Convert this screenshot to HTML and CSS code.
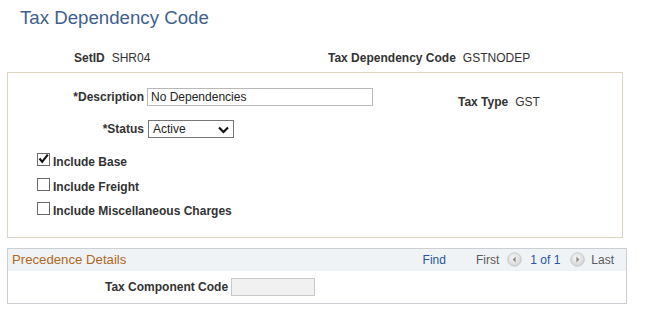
FILE: index.html
```html
<!DOCTYPE html>
<html lang="en">
<head>
<meta charset="utf-8">
<title>Tax Dependency Code</title>
<link rel="stylesheet" href="styles.css">
</head>
<body>
<div class="page">
  <h1 class="title">Tax Dependency Code</h1>

  <div class="keys">
    <div class="kv kv-first"><span class="lbl">SetID</span><span class="val">SHR04</span></div>
    <div class="kv"><span class="lbl">Tax Dependency Code</span><span class="val">GSTNODEP</span></div>
  </div>

  <section class="box main">
    <div class="form">
      <label class="lbl flabel">*Description</label>
      <div class="input desc">No Dependencies</div>
      <div class="kv taxtype"><span class="lbl">Tax Type</span><span class="val">GST</span></div>

      <label class="lbl flabel">*Status</label>
      <div class="select">
        <span>Active</span>
        <svg class="chev" width="11" height="8" viewBox="0 0 11 8"><path d="M1 1.5 L5.5 6 L10 1.5" fill="none" stroke="#111" stroke-width="2.2"/></svg>
      </div>
    </div>

    <div class="checks">
      <div class="check-row">
        <span class="cb">
          <svg width="13" height="13" viewBox="0 0 13 13"><path d="M2.5 6.5 L5.2 9.8 L10.8 2.6" fill="none" stroke="#111" stroke-width="2.1"/></svg>
        </span>
        <span class="lbl">Include Base</span>
      </div>
      <div class="check-row"><span class="cb"></span><span class="lbl">Include Freight</span></div>
      <div class="check-row"><span class="cb"></span><span class="lbl">Include Miscellaneous Charges</span></div>
    </div>
  </section>

  <section class="box prec">
    <div class="prec-head">
      <span class="prec-title">Precedence Details</span>
      <div class="nav">
        <span class="link">Find</span>
        <span class="muted first">First</span>
        <svg class="navbtn prev" width="15" height="15" viewBox="0 0 15 15">
          <defs><radialGradient id="g1" cx="45%" cy="40%" r="60%"><stop offset="0" stop-color="#fafafa"/><stop offset="1" stop-color="#d2d2d2"/></radialGradient></defs>
          <circle cx="7.5" cy="7.5" r="6.8" fill="url(#g1)" stroke="#c4c4c4" stroke-width="0.8"/>
          <path d="M8.6 4.6 L5.6 7.5 L8.6 10.4 Z" fill="#8a8a8a"/>
        </svg>
        <span class="link count">1 of 1</span>
        <svg class="navbtn next" width="15" height="15" viewBox="0 0 15 15">
          <defs><radialGradient id="g2" cx="45%" cy="40%" r="60%"><stop offset="0" stop-color="#fafafa"/><stop offset="1" stop-color="#d2d2d2"/></radialGradient></defs>
          <circle cx="7.5" cy="7.5" r="6.8" fill="url(#g2)" stroke="#c4c4c4" stroke-width="0.8"/>
          <path d="M6.4 4.6 L9.4 7.5 L6.4 10.4 Z" fill="#8a8a8a"/>
        </svg>
        <span class="muted">Last</span>
      </div>
    </div>
    <div class="prec-body">
      <span class="lbl">Tax Component Code</span>
      <div class="input comp"></div>
    </div>
  </section>
</div>
</body>
</html>
```

FILE: styles.css
```css
* { box-sizing: border-box; }

body {
  margin: 0;
  background: #ffffff;
  font-family: "Liberation Sans", Arial, sans-serif;
  font-size: 12px;
  color: #333333;
}

.page {
  width: 647px;
}

.title {
  margin: 0;
  padding: 7px 0 0 20px;
  font-size: 18.67px;
  line-height: 22px;
  font-weight: normal;
  color: #3f5f8f;
}

.lbl {
  font-weight: bold;
  color: #333333;
}

.val {
  color: #333333;
}

.kv {
  display: flex;
  gap: 7px;
  line-height: 14px;
}

.keys {
  display: flex;
  margin-top: 22px;
  padding-left: 74px;
}

.kv-first {
  width: 254px;
}

.box {
  margin-left: 7px;
}

.main {
  width: 616px;
  margin-top: 7px;
  border: 1px solid #ddd4c3;
  padding: 15px 0 19px 0;
}

.form {
  display: grid;
  grid-template-columns: 136px 226px auto;
  column-gap: 3px;
  row-gap: 14px;
  align-items: start;
}

.flabel {
  text-align: right;
  line-height: 14px;
  padding-top: 2px;
}

.input {
  height: 18px;
  border: 1px solid #b8b8b8;
  background: #ffffff;
  padding: 0 3px;
  line-height: 16px;
  color: #222222;
}

.taxtype {
  margin-left: 82px;
  margin-top: 7px;
  margin-bottom: -7px;
}

.select {
  width: 86px;
  height: 18px;
  margin-left: 1px;
  border: 1px solid #767676;
  display: flex;
  align-items: center;
  justify-content: space-between;
  padding: 0 4px 0 4px;
  line-height: 16px;
  color: #222222;
}

.chev {
  display: block;
  margin-top: 1px;
}

.checks {
  display: flex;
  flex-direction: column;
  margin-top: 15px;
  padding-left: 29px;
  gap: 8.5px;
}

.check-row {
  display: flex;
  align-items: flex-start;
  gap: 3px;
  line-height: 14px;
  height: 16px;
}

.cb {
  width: 13px;
  height: 13px;
  border: 1px solid #6a6a6a;
  background: #ffffff;
  display: block;
  position: relative;
}

.cb svg {
  position: absolute;
  left: -1px;
  top: -2px;
}

.check-row .lbl {
  padding-top: 2px;
}

.prec {
  width: 620px;
  margin-top: 10px;
  border: 1px solid #cbcfd3;
}

.prec-head {
  height: 22px;
  background: #eff3f5;
  display: flex;
  align-items: center;
  justify-content: space-between;
  padding: 0 12px 0 4px;
}

.prec-title {
  font-size: 13.2px;
  color: #b0681f;
  line-height: 16px;
}

.nav {
  display: flex;
  align-items: center;
  line-height: 14px;
}

.link {
  color: #2a55a0;
}

.muted {
  color: #5a5a5a;
}

.first {
  margin-left: 30px;
}

.navbtn {
  display: block;
  margin-bottom: 2px;
}

.prev {
  margin-left: 8px;
  margin-right: 8px;
}

.next {
  margin-left: 10px;
  margin-right: 6px;
}

.prec-body {
  height: 32px;
  display: flex;
  align-items: center;
  padding-left: 97px;
  gap: 3px;
}

.comp {
  width: 84px;
  background: #f1f1f1;
  border-color: #c8c8c8;
}
```
